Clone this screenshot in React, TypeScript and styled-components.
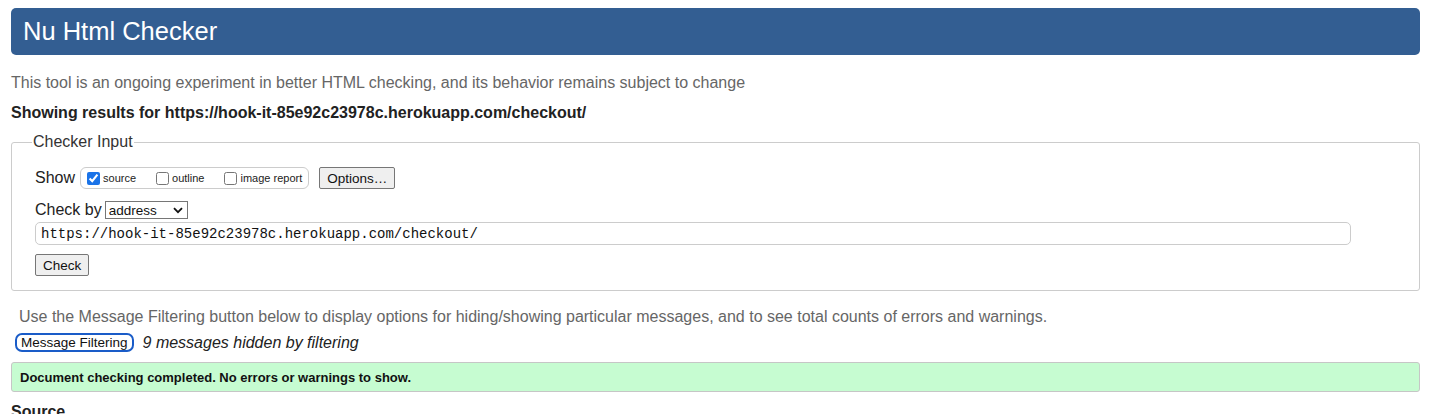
import React from "react";
import styled, { createGlobalStyle } from "styled-components";

const Global = createGlobalStyle`
  html, body { margin: 0; padding: 0; background: #fff; }
  body { font-family: "Liberation Sans", Arial, sans-serif; color: #222; }
`;

const Page = styled.div`
  margin: 8px 31px 0 11px;
`;

const Header = styled.header`
  background: #335e92;
  border-radius: 5px;
  height: 47px;
  display: flex;
  align-items: center;
  padding: 0 12px;
`;

const Title = styled.h1`
  margin: 0;
  font-size: 25.5px;
  font-weight: normal;
  color: #fff;
`;

const Intro = styled.p`
  margin: 18px 0 0;
  font-size: 16px;
  line-height: 19px;
  color: #666;
`;

const Results = styled.p`
  margin: 11px 0 0;
  font-size: 16px;
  line-height: 19px;
  font-weight: bold;
  color: #222;
`;

const Fieldset = styled.fieldset`
  margin: 11px 0 0;
  padding: 6px 22px 14px 23px;
  border: 1px solid #cccccc;
  border-radius: 3px;
  min-width: 0;
`;

const Legend = styled.legend`
  font-size: 16px;
  color: #333;
  padding: 0 1px;
  margin-left: -3px;
`;

const Row = styled.div<{ gap?: number; top?: number }>`
  display: flex;
  align-items: center;
  gap: ${(p) => p.gap ?? 5}px;
  margin-top: ${(p) => p.top ?? 0}px;
`;

const Label = styled.span`
  font-size: 16px;
  color: #222;
`;

const CheckGroup = styled.div`
  display: flex;
  align-items: center;
  height: 20px;
  border: 1px solid #cccccc;
  border-radius: 6px;
  padding: 0 6px 0 6px;
  gap: 20px;
`;

const CheckItem = styled.label`
  display: flex;
  align-items: center;
  font-size: 11px;
  color: #222;
  input {
    margin: 0 3px 0 0;
    width: 13px;
    height: 13px;
    accent-color: #1a73e8;
  }
`;

const Button = styled.button`
  font-family: "Liberation Sans", Arial, sans-serif;
  font-size: 13.5px;
  height: 22px;
  padding: 0 7px;
  background: #efefef;
  border: 1px solid #767676;
  border-radius: 2px;
  color: #111;
`;

const SelectWrap = styled.div`
  position: relative;
  display: inline-flex;
`;

const Select = styled.select`
  appearance: none;
  font-family: "Liberation Sans", Arial, sans-serif;
  font-size: 13.5px;
  width: 83px;
  height: 18px;
  padding: 0 0 0 3px;
  border: 1px solid #767676;
  border-radius: 0;
  background: #fff;
  color: #111;
`;

const Chevron = styled.svg`
  position: absolute;
  right: 5px;
  top: 6px;
  pointer-events: none;
`;

const UrlInput = styled.input`
  box-sizing: border-box;
  width: 1316px;
  height: 23px;
  margin-top: 3px;
  padding: 0 5px;
  border: 1px solid #cccccc;
  border-radius: 5px;
  font-family: "Liberation Mono", "Courier New", monospace;
  font-size: 14px;
  color: #111;
`;

const Note = styled.p`
  margin: 16px 0 0 8px;
  font-size: 16px;
  line-height: 19px;
  color: #666;
`;

const FilterButton = styled.button`
  font-family: "Liberation Sans", Arial, sans-serif;
  font-size: 13.5px;
  height: 19px;
  padding: 0 4px;
  background: #fff;
  border: 2px solid #1a5cc8;
  border-radius: 7px;
  color: #111;
`;

const Hidden = styled.em`
  font-size: 16px;
  color: #222;
`;

const Success = styled.div`
  margin-top: 10px;
  height: 28px;
  display: flex;
  align-items: center;
  padding: 0 8px;
  background: #c6fcd1;
  border: 1px solid #c6c6c6;
  border-radius: 3px;
  font-size: 13px;
  font-weight: bold;
  color: #111;
`;

const SourceHeading = styled.h2`
  margin: 11px 0 0;
  font-size: 16px;
  font-weight: bold;
  color: #222;
`;

export default function App() {
  return (
    <Page>
      <Global />
      <Header>
        <Title>Nu Html Checker</Title>
      </Header>
      <Intro>
        This tool is an ongoing experiment in better HTML checking, and its behavior remains subject to change
      </Intro>
      <Results>Showing results for https://hook-it-85e92c23978c.herokuapp.com/checkout/</Results>
      <Fieldset>
        <Legend>Checker Input</Legend>
        <Row gap={5} top={10}>
          <Label>Show</Label>
          <CheckGroup>
            <CheckItem>
              <input type="checkbox" defaultChecked />
              source
            </CheckItem>
            <CheckItem>
              <input type="checkbox" />
              outline
            </CheckItem>
            <CheckItem>
              <input type="checkbox" />
              image report
            </CheckItem>
          </CheckGroup>
          <Button style={{ marginLeft: 5 }}>Options…</Button>
        </Row>
        <Row gap={3} top={12}>
          <Label>Check by</Label>
          <SelectWrap>
            <Select defaultValue="address">
              <option value="address">address</option>
              <option value="file">file upload</option>
              <option value="text">text input</option>
            </Select>
            <Chevron width="10" height="7" viewBox="0 0 10 7">
              <path d="M1 1.2 L5 5.2 L9 1.2" fill="none" stroke="#111" strokeWidth="1.8" />
            </Chevron>
          </SelectWrap>
        </Row>
        <UrlInput defaultValue="https://hook-it-85e92c23978c.herokuapp.com/checkout/" />
        <Row top={9}>
          <Button>Check</Button>
        </Row>
      </Fieldset>
      <Note>
        Use the Message Filtering button below to display options for hiding/showing particular messages, and to see total counts of errors and warnings.
      </Note>
      <Row gap={9} top={7} style={{ marginLeft: 4 }}>
        <FilterButton>Message Filtering</FilterButton>
        <Hidden>9 messages hidden by filtering</Hidden>
      </Row>
      <Success>Document checking completed. No errors or warnings to show.</Success>
      <SourceHeading>Source</SourceHeading>
    </Page>
  );
}
